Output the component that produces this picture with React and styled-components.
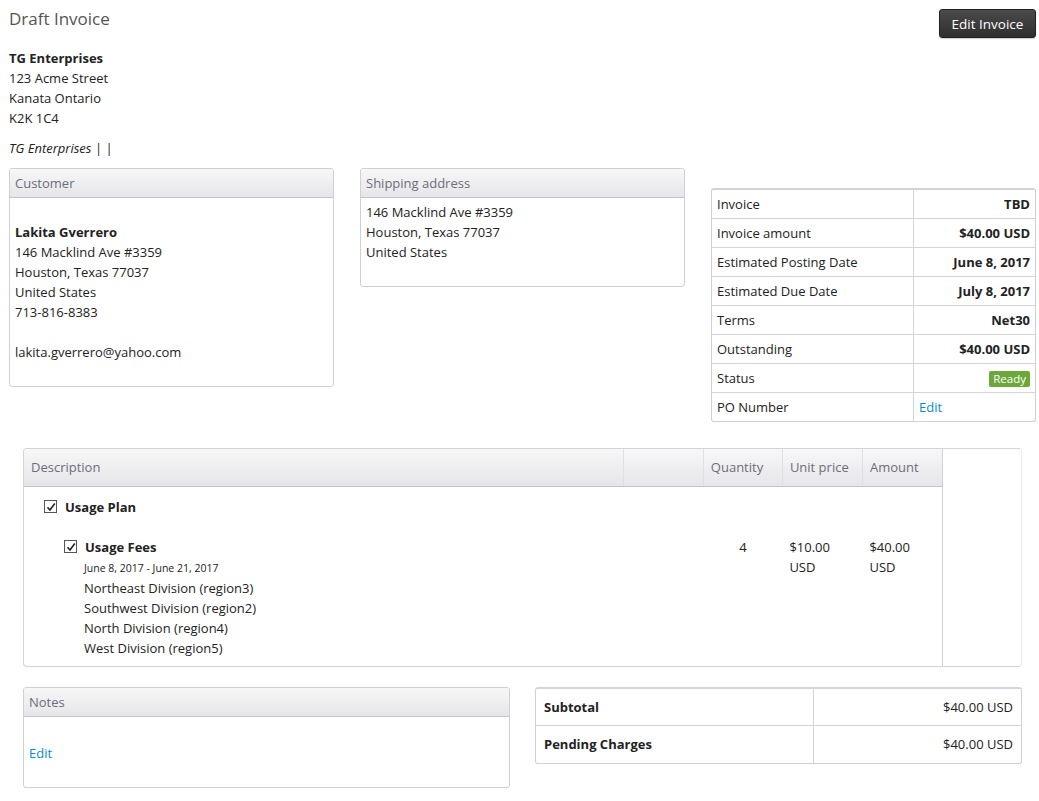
import React from "react";
import styled, { createGlobalStyle } from "styled-components";

const GlobalStyle = createGlobalStyle`
  body {
    margin: 0;
    background: #fff;
    font-family: "Open Sans", "Noto Sans", Arial, sans-serif;
    font-size: 13px;
    color: #222;
  }
  * { box-sizing: border-box; }
`;

const info = [
  ["Invoice", "TBD"],
  ["Invoice amount", "$40.00 USD"],
  ["Estimated Posting Date", "June 8, 2017"],
  ["Estimated Due Date", "July 8, 2017"],
  ["Terms", "Net30"],
  ["Outstanding", "$40.00 USD"],
  ["Status", "ready"],
  ["PO Number", "edit"],
];

const regions = [
  "Northeast Division (region3)",
  "Southwest Division (region2)",
  "North Division (region4)",
  "West Division (region5)",
];

const Check = () => (
  <CheckBox>
    <svg width="10" height="10" viewBox="0 0 10 10">
      <path d="M1.5 5.2 L4 8 L8.8 1.6" fill="none" stroke="#222" strokeWidth="1.6" />
    </svg>
  </CheckBox>
);

const App = () => {
  return (
    <Page>
      <GlobalStyle />
      <TopBar>
        <Title>Draft Invoice</Title>
        <DarkButton>Edit Invoice</DarkButton>
      </TopBar>

      <Company>
        <Bold>TG Enterprises</Bold>
        <div>123 Acme Street</div>
        <div>Kanata Ontario</div>
        <div>K2K 1C4</div>
      </Company>
      <Tagline>TG Enterprises | |</Tagline>

      <InfoRow>
        <Panel $width={325}>
          <PanelHeader>Customer</PanelHeader>
          <PanelBody $pad="4px 5px 24px">
            <Line>&nbsp;</Line>
            <Line><Bold>Lakita Gverrero</Bold></Line>
            <Line>146 Macklind Ave #3359</Line>
            <Line>Houston, Texas 77037</Line>
            <Line>United States</Line>
            <Line>713-816-8383</Line>
            <Line>&nbsp;</Line>
            <Line>lakita.gverrero@yahoo.com</Line>
          </PanelBody>
        </Panel>

        <Panel $width={325}>
          <PanelHeader>Shipping address</PanelHeader>
          <PanelBody $pad="4px 5px 24px">
            <Line>146 Macklind Ave #3359</Line>
            <Line>Houston, Texas 77037</Line>
            <Line>United States</Line>
          </PanelBody>
        </Panel>

        <InfoTable>
          <tbody>
            {info.map(([label, value]) => (
              <tr key={label}>
                <InfoLabel>{label}</InfoLabel>
                {value === "ready" ? (
                  <InfoValue><Badge>Ready</Badge></InfoValue>
                ) : value === "edit" ? (
                  <InfoValue $left><Link>Edit</Link></InfoValue>
                ) : (
                  <InfoValue>{value}</InfoValue>
                )}
              </tr>
            ))}
          </tbody>
        </InfoTable>
      </InfoRow>

      <ItemsBox>
        <ItemsTable>
          <thead>
            <tr>
              <HeadCell $w={599}>Description</HeadCell>
              <HeadCell $w={80}></HeadCell>
              <HeadCell $w={79}>Quantity</HeadCell>
              <HeadCell $w={80}>Unit price</HeadCell>
              <HeadCell $w={80}>Amount</HeadCell>
            </tr>
          </thead>
          <tbody>
            <tr>
              <BodyCell colSpan={5} $top={10}>
                <PlanRow>
                  <Check />
                  <Bold>Usage Plan</Bold>
                </PlanRow>
              </BodyCell>
            </tr>
            <tr>
              <BodyCell colSpan={2}>
                <FeeBlock>
                  <PlanRow>
                    <Check />
                    <Bold>Usage Fees</Bold>
                  </PlanRow>
                  <FeeDetails>
                    <Small>June 8, 2017 - June 21, 2017</Small>
                    {regions.map((r) => (
                      <Line key={r}>{r}</Line>
                    ))}
                  </FeeDetails>
                </FeeBlock>
              </BodyCell>
              <BodyCell $center $top={12}>4</BodyCell>
              <BodyCell $top={12}>$10.00<br />USD</BodyCell>
              <BodyCell $top={12}>$40.00<br />USD</BodyCell>
            </tr>
          </tbody>
        </ItemsTable>
      </ItemsBox>

      <BottomRow>
        <Panel $width={487} $height={101}>
          <PanelHeader>Notes</PanelHeader>
          <PanelBody $pad="26px 5px">
            <Link>Edit</Link>
          </PanelBody>
        </Panel>
        <TotalsTable>
          <tbody>
            <tr>
              <TotalLabel>Subtotal</TotalLabel>
              <TotalValue>$40.00 USD</TotalValue>
            </tr>
            <tr>
              <TotalLabel>Pending Charges</TotalLabel>
              <TotalValue>$40.00 USD</TotalValue>
            </tr>
          </tbody>
        </TotalsTable>
      </BottomRow>
    </Page>
  );
};

export default App;

const Page = styled.div`
  width: 1039px;
  padding: 9px 3px 14px 9px;
`;

const TopBar = styled.div`
  display: flex;
  justify-content: space-between;
  align-items: flex-start;
`;

const Title = styled.h1`
  margin: 0;
  font-size: 17px;
  font-weight: 400;
  color: #555;
  line-height: 20px;
`;

const DarkButton = styled.button`
  width: 97px;
  height: 29px;
  border: 1px solid #222;
  border-radius: 3px;
  background: linear-gradient(#4a4a4a, #2f2f2f);
  color: #fff;
  font-family: inherit;
  font-size: 13.5px;
  padding: 0;
  box-shadow: 0 1px 1px rgba(0, 0, 0, 0.2);
`;

const Company = styled.div`
  margin-top: 10px;
  line-height: 20px;
`;

const Bold = styled.span`
  font-weight: 700;
`;

const Tagline = styled.div`
  margin-top: 10px;
  line-height: 20px;
  font-style: italic;
`;

const InfoRow = styled.div`
  margin-top: 10px;
  display: flex;
  align-items: flex-start;
  gap: 26px;
`;

const Panel = styled.div`
  width: ${(p) => p.$width}px;
  ${(p) => (p.$height ? `height: ${p.$height}px;` : "")}
  border: 1px solid #cfcfd4;
  border-radius: 3px;
  overflow: hidden;
  background: #fff;
`;

const PanelHeader = styled.div`
  height: 29px;
  padding: 0 5px;
  display: flex;
  align-items: center;
  background: linear-gradient(#f7f7f8, #e6e6ea);
  border-bottom: 1px solid #c3c3c9;
  color: #6d6d78;
  font-size: 13px;
`;

const PanelBody = styled.div`
  padding: ${(p) => p.$pad};
  line-height: 20px;
`;

const Line = styled.div`
  line-height: 20px;
`;

const InfoTable = styled.table`
  margin-top: 20px;
  width: 325px;
  border-collapse: separate;
  border-spacing: 0;
  border: 1px solid #cfcfd4;
  border-top: 2px solid #d4d4d8;
  border-radius: 3px;
`;

const InfoLabel = styled.td`
  width: 202px;
  height: 29px;
  padding: 0 5px;
  border-right: 1px solid #d4d4d8;
  border-bottom: 1px solid #d4d4d8;
  tr:last-child & {
    border-bottom: none;
    height: 28px;
  }
`;

const InfoValue = styled.td`
  height: 29px;
  padding: 0 5px;
  text-align: ${(p) => (p.$left ? "left" : "right")};
  font-weight: 700;
  border-bottom: 1px solid #d4d4d8;
  tr:last-child & {
    border-bottom: none;
    height: 28px;
  }
`;

const Badge = styled.span`
  display: inline-block;
  background: #6ca73a;
  color: #fff;
  font-size: 11.5px;
  font-weight: 400;
  line-height: 16px;
  padding: 0 4px;
  border-radius: 2px;
`;

const Link = styled.span`
  color: #0a8ad2;
  font-weight: 400;
`;

const ItemsBox = styled.div`
  margin: 26px 0 0 14px;
  width: 999px;
  border: 1px solid #d4d4d8;
  border-right-color: #ececef;
  border-radius: 4px;
  overflow: hidden;
`;

const ItemsTable = styled.table`
  width: 919px;
  border-collapse: collapse;
  border-right: 1px solid #d0d0d6;
`;

const HeadCell = styled.th`
  width: ${(p) => p.$w}px;
  height: 37px;
  padding: 0 7px;
  text-align: left;
  font-weight: 400;
  color: #6d6d78;
  background: linear-gradient(#f7f7f8, #e6e6ea);
  border-bottom: 1px solid #c3c3c9;
  border-left: 1px solid #e0e0e4;
  &:first-child {
    border-left: none;
  }
`;

const BodyCell = styled.td`
  vertical-align: top;
  padding: ${(p) => p.$top || 8}px 7px 8px;
  line-height: 20px;
  text-align: ${(p) => (p.$center ? "center" : "left")};
`;

const PlanRow = styled.div`
  display: flex;
  align-items: center;
  gap: 8px;
  line-height: 20px;
  padding-left: 13px;
`;

const CheckBox = styled.span`
  width: 13px;
  height: 13px;
  border: 1px solid #555;
  display: inline-flex;
  align-items: center;
  justify-content: center;
  background: #fff;
`;

const FeeBlock = styled.div`
  padding: 4px 0 0 20px;
`;

const FeeDetails = styled.div`
  padding-left: 33px;
  margin-top: 1px;
`;

const Small = styled.div`
  font-size: 10.5px;
  line-height: 20px;
`;

const BottomRow = styled.div`
  margin: 20px 0 0 14px;
  display: flex;
  align-items: flex-start;
  gap: 25px;
`;

const TotalsTable = styled.table`
  width: 487px;
  border-collapse: separate;
  border-spacing: 0;
  border: 1px solid #cfcfd4;
  border-top: 2px solid #d4d4d8;
  border-radius: 3px;
`;

const TotalLabel = styled.td`
  width: 278px;
  height: 37px;
  padding: 0 8px;
  font-weight: 700;
  border-right: 1px solid #d4d4d8;
  border-bottom: 1px solid #d4d4d8;
  tr:last-child & {
    border-bottom: none;
  }
`;

const TotalValue = styled.td`
  height: 37px;
  padding: 0 8px;
  text-align: right;
  border-bottom: 1px solid #d4d4d8;
  tr:last-child & {
    border-bottom: none;
  }
`;
